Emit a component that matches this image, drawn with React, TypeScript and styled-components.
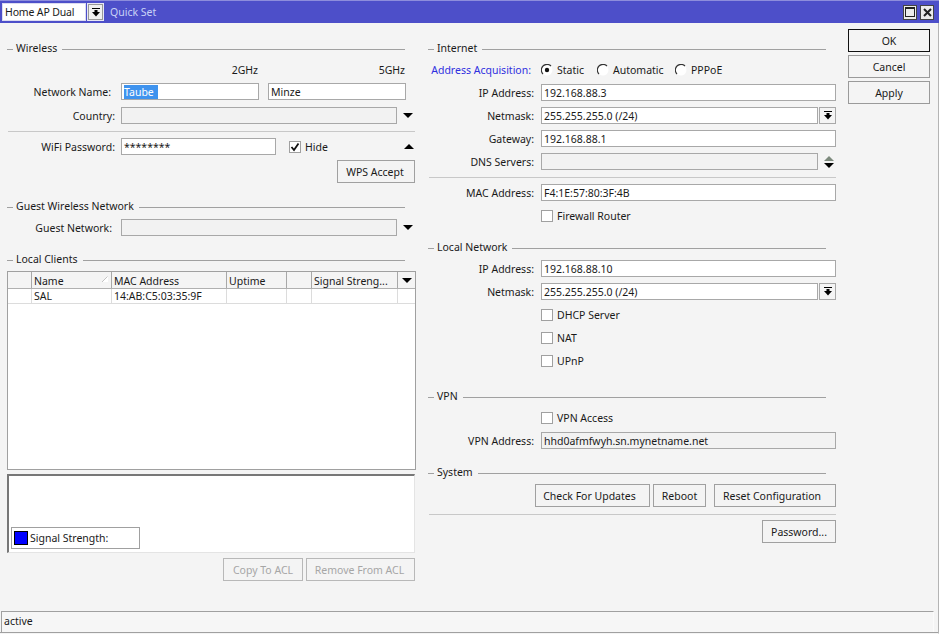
import React from 'react';
import styled, { createGlobalStyle } from 'styled-components';

const GlobalStyle = createGlobalStyle`
  html, body {
    margin: 0;
    padding: 0;
    background: #f4f4f4;
  }
  * {
    box-sizing: border-box;
  }
`;

const Window = styled.div`
  width: 939px;
  height: 634px;
  display: flex;
  flex-direction: column;
  overflow: hidden;
  background: #f4f4f4;
  color: #1a1a1a;
  font-family: 'Noto Sans', 'Liberation Sans', sans-serif;
  font-size: 10.5px;
`;

const TitleBar = styled.div`
  height: 23px;
  flex: none;
  display: flex;
  align-items: center;
  padding: 0 5px 0 2px;
  background: #4d4fc9;
  border-top: 1px solid #8d8ddc;
`;

const ModeSelect = styled.div`
  width: 84px;
  height: 18px;
  display: flex;
  align-items: center;
  padding-left: 2px;
  letter-spacing: -0.15px;
  background: #fff;
  border: 1px solid #dcdcf0;
`;

const TitleButton = styled.div`
  width: 17px;
  height: 18px;
  margin-left: 1px;
  display: flex;
  align-items: center;
  justify-content: center;
  background: #f0f0f0;
  border: 1px solid #e8e8f4;
  box-shadow: inset 0 0 0 1px #999;
`;

const TitleText = styled.div`
  margin-left: 6px;
  flex: 1;
  color: #c9d3f6;
`;

const WindowButton = styled.div`
  width: 14px;
  height: 15px;
  margin-left: 3px;
  display: flex;
  align-items: center;
  justify-content: center;
  background: #ececec;
  border: 1px solid #444;
`;

const Body = styled.div`
  flex: 1;
  display: flex;
  padding: 6px 0 0 7px;
  border-right: 1px solid #b4b4b4;
`;

const Column = styled.div<{ $left?: number; $label: number; $labelGap: number }>`
  --label: ${(p) => p.$label}px;
  --label-gap: ${(p) => p.$labelGap}px;
  width: 409px;
  margin-left: ${(p) => p.$left ?? 0}px;
  display: flex;
  flex-direction: column;
`;

const Actions = styled.div`
  width: 82px;
  margin-left: 11px;
  display: flex;
  flex-direction: column;
  gap: 3px;
`;

const ActionButton = styled.div<{ $primary?: boolean }>`
  height: 23px;
  display: flex;
  align-items: center;
  justify-content: center;
  border: 1px solid ${(p) => (p.$primary ? '#111' : '#9a9a9a')};
`;

const Heading = styled.div<{ $top: number }>`
  height: 14px;
  margin-top: ${(p) => p.$top}px;
  margin-right: 11px;
  display: flex;
  align-items: center;
  gap: 3px;
  white-space: nowrap;
  &::before {
    content: '';
    width: 6px;
    height: 1px;
    margin-top: 2px;
    background: #a0a0a0;
  }
  &::after {
    content: '';
    flex: 1;
    height: 1px;
    margin: 2px 0 0 2px;
    background: #a0a0a0;
  }
`;

const Row = styled.div<{ $top: number; $height?: number }>`
  height: ${(p) => p.$height ?? 17}px;
  margin-top: ${(p) => p.$top}px;
  display: flex;
  align-items: center;
`;

const Label = styled.div<{ $nudge?: number; $accent?: boolean }>`
  width: var(--label);
  flex: none;
  padding-right: calc(var(--label-gap) + ${(p) => p.$nudge ?? 0}px);
  text-align: right;
  white-space: nowrap;
  color: ${(p) => (p.$accent ? '#2f2fe0' : 'inherit')};
`;

const Field = styled.div<{ $width: number; $left?: number; $disabled?: boolean }>`
  width: ${(p) => p.$width}px;
  height: 17px;
  flex: none;
  margin-left: ${(p) => p.$left ?? 0}px;
  display: flex;
  align-items: center;
  padding-left: 2px;
  white-space: nowrap;
  overflow: hidden;
  background: ${(p) => (p.$disabled ? '#f2f2f2' : '#fff')};
  border: 1px solid #a8a8a8;
`;

const Selected = styled.span`
  padding-right: 4px;
  color: #fff;
  background: #3f93ee;
`;

const Caption = styled.div<{ $width: number }>`
  width: ${(p) => p.$width}px;
  text-align: right;
`;

const Separator = styled.div<{ $top: number }>`
  height: 1px;
  margin: ${(p) => p.$top}px 1px 0 1px;
  background: #c8c8c8;
`;

const ArrowSlot = styled.div<{ $left: number }>`
  margin-left: ${(p) => p.$left}px;
  display: flex;
  flex-direction: column;
  gap: 2px;
`;

const SmallButton = styled.div`
  width: 17px;
  height: 17px;
  margin-left: 1px;
  display: flex;
  align-items: center;
  justify-content: center;
  border: 1px solid #a8a8a8;
`;

const CheckBox = styled.div<{ $left?: number }>`
  width: 12px;
  height: 12px;
  flex: none;
  margin-left: ${(p) => p.$left ?? 0}px;
  margin-right: 4px;
  display: flex;
  align-items: center;
  justify-content: center;
  background: #fff;
  border: 1px solid #a0a0a0;
`;

const RadioItem = styled.div<{ $width: number }>`
  width: ${(p) => p.$width}px;
  display: flex;
  align-items: center;
  gap: 4px;
`;

const ButtonRow = styled.div<{ $top: number }>`
  height: 23px;
  margin-top: ${(p) => p.$top}px;
  margin-right: 1px;
  display: flex;
  justify-content: flex-end;
`;

const Button = styled.div<{ $width: number; $left?: number; $shift?: number; $disabled?: boolean }>`
  width: ${(p) => p.$width}px;
  margin-left: ${(p) => p.$left ?? 0}px;
  padding-right: ${(p) => p.$shift ?? 0}px;
  display: flex;
  align-items: center;
  justify-content: center;
  white-space: nowrap;
  color: ${(p) => (p.$disabled ? '#a6a6a6' : 'inherit')};
  border: 1px solid ${(p) => (p.$disabled ? '#b8b8b8' : '#a0a0a0')};
`;

const Table = styled.div`
  height: 199px;
  margin-top: 5px;
  background: #fff;
  border: 1px solid #a0a0a0;
`;

const TableRow = styled.div<{ $head?: boolean }>`
  height: ${(p) => (p.$head ? 17 : 15)}px;
  display: grid;
  grid-template-columns: 24px 80px 115px 60px 25px 86px 17px;
  background: ${(p) => (p.$head ? '#f4f4f4' : '#fff')};
  border-bottom: 1px solid ${(p) => (p.$head ? '#b0b0b0' : '#dcdcdc')};
`;

const Cell = styled.div<{ $head?: boolean }>`
  position: relative;
  display: flex;
  align-items: center;
  padding: ${(p) => (p.$head ? 1 : 0)}px 0 0 2px;
  white-space: nowrap;
  overflow: hidden;
  border-right: 1px solid ${(p) => (p.$head ? '#a8a8a8' : '#dcdcdc')};
  &:last-child {
    border-right: 0;
    justify-content: center;
    padding-left: 0;
  }
`;

const SortMark = styled.svg`
  position: absolute;
  right: 2px;
  top: 4px;
`;

const Graph = styled.div`
  height: 79px;
  margin-top: 4px;
  margin-right: 1px;
  display: flex;
  align-items: flex-end;
  padding: 0 0 3px 2px;
  background: #fff;
  border: 1px solid #e4e4e4;
  border-top: 2px solid #777;
  border-left: 2px solid #777;
`;

const Legend = styled.div`
  width: 129px;
  height: 22px;
  display: flex;
  align-items: center;
  gap: 2px;
  padding-left: 2px;
  border: 1px solid #a0a0a0;
`;

const Swatch = styled.div`
  width: 14px;
  height: 14px;
  background: #0000ff;
  border: 1px solid #000;
`;

const Footer = styled.div`
  height: 23px;
  flex: none;
  display: flex;
  padding: 0 4px 1px 1px;
  border-right: 1px solid #b4b4b4;
  border-bottom: 1px solid #f4f4f4;
  box-shadow: inset 0 -1px 0 #a0a0a0;
`;

const StatusBar = styled.div`
  flex: 1;
  display: flex;
  align-items: center;
  padding: 0 0 2px 2px;
  background: #f6f6f6;
  border-top: 1px solid #a0a0a0;
  border-left: 1px solid #a0a0a0;
  border-right: 1px solid #fbfbfb;
`;

const Drop = ({ up, color = '#000' }: { up?: boolean; color?: string }) => (
  <svg width="10" height="5" viewBox="0 0 10 5">
    <path d={up ? 'M5 0 L10 5 L0 5 Z' : 'M0 0 L10 0 L5 5 Z'} fill={color} />
  </svg>
);

const DropBar = () => (
  <svg width="8" height="9" viewBox="0 0 8 9">
    <rect x="0" y="0" width="8" height="1" fill="#000" />
    <rect x="2.5" y="2" width="3" height="2" fill="#000" />
    <path d="M0 4 L8 4 L4 8.5 Z" fill="#000" />
  </svg>
);

const Radio = ({ on }: { on?: boolean }) => (
  <svg width="12" height="12" viewBox="0 0 12 12">
    <circle cx="6" cy="6" r="5.5" fill="#fff" />
    <path d="M10 2 A5.5 5.5 0 0 0 2 10" fill="none" stroke="#333" strokeWidth="1.1" />
    {on && <circle cx="6" cy="6" r="2.2" fill="#111" />}
  </svg>
);

const Check = () => (
  <svg width="10" height="10" viewBox="0 0 10 10">
    <path d="M1.5 5 L4 8 L8.5 1.5" fill="none" stroke="#111" strokeWidth="1.8" />
  </svg>
);

const App = () => (
  <Window>
    <GlobalStyle />
    <TitleBar>
      <ModeSelect>Home AP Dual</ModeSelect>
      <TitleButton>
        <DropBar />
      </TitleButton>
      <TitleText>Quick Set</TitleText>
      <WindowButton>
        <svg width="10" height="10" viewBox="0 0 10 10">
          <rect x="0.5" y="0.5" width="9" height="9" fill="none" stroke="#222" />
          <rect x="0" y="0" width="10" height="2" fill="#222" />
        </svg>
      </WindowButton>
      <WindowButton>
        <svg width="9" height="9" viewBox="0 0 9 9">
          <path d="M1 1 L8 8 M8 1 L1 8" stroke="#222" strokeWidth="2" />
        </svg>
      </WindowButton>
    </TitleBar>
    <Body>
      <Column $label={114} $labelGap={6}>
        <Heading $top={12}>Wireless</Heading>
        <Row $top={8} $height={14}>
          <Caption $width={251}>2GHz</Caption>
          <Caption $width={147}>5GHz</Caption>
        </Row>
        <Row $top={6}>
          <Label $nudge={4}>Network Name:</Label>
          <Field $width={138}>
            <Selected>Taube</Selected>
          </Field>
          <Field $width={138} $left={9}>
            Minze
          </Field>
        </Row>
        <Row $top={7}>
          <Label>Country:</Label>
          <Field $width={276} $disabled />
          <ArrowSlot $left={6}>
            <Drop />
          </ArrowSlot>
        </Row>
        <Separator $top={7} />
        <Row $top={6}>
          <Label>WiFi Password:</Label>
          <Field $width={155}>********</Field>
          <CheckBox $left={13}>
            <Check />
          </CheckBox>
          Hide
          <ArrowSlot $left={76}>
            <Drop up />
          </ArrowSlot>
        </Row>
        <ButtonRow $top={5}>
          <Button $width={78} $shift={2}>
            WPS Accept
          </Button>
        </ButtonRow>
        <Heading $top={16}>Guest Wireless Network</Heading>
        <Row $top={6}>
          <Label $nudge={3}>Guest Network:</Label>
          <Field $width={276} $disabled />
          <ArrowSlot $left={6}>
            <Drop />
          </ArrowSlot>
        </Row>
        <Heading $top={16}>Local Clients</Heading>
        <Table>
          <TableRow $head>
            <Cell $head />
            <Cell $head>
              Name
              <SortMark width="8" height="7" viewBox="0 0 8 7">
                <path d="M7 0 L7 6 L1 6 Z" fill="#fff" />
                <path d="M6.5 0.5 L1 6" stroke="#b4b4b4" strokeWidth="0.8" fill="none" />
              </SortMark>
            </Cell>
            <Cell $head>MAC Address</Cell>
            <Cell $head>Uptime</Cell>
            <Cell $head />
            <Cell $head>Signal Streng...</Cell>
            <Cell $head>
              <Drop />
            </Cell>
          </TableRow>
          <TableRow>
            <Cell />
            <Cell>SAL</Cell>
            <Cell>14:AB:C5:03:35:9F</Cell>
            <Cell />
            <Cell />
            <Cell />
            <Cell />
          </TableRow>
        </Table>
        <Graph>
          <Legend>
            <Swatch />
            Signal Strength:
          </Legend>
        </Graph>
        <ButtonRow $top={5}>
          <Button $width={80} $disabled>
            Copy To ACL
          </Button>
          <Button $width={109} $left={3} $shift={2} $disabled>
            Remove From ACL
          </Button>
        </ButtonRow>
      </Column>
      <Column $left={12} $label={113} $labelGap={7}>
        <Heading $top={12}>Internet</Heading>
        <Row $top={8} $height={14}>
          <Label $nudge={3} $accent>
            Address Acquisition:
          </Label>
          <RadioItem $width={56}>
            <Radio on />
            Static
          </RadioItem>
          <RadioItem $width={78}>
            <Radio />
            Automatic
          </RadioItem>
          <RadioItem $width={60}>
            <Radio />
            PPPoE
          </RadioItem>
        </Row>
        <Row $top={7}>
          <Label>IP Address:</Label>
          <Field $width={295}>192.168.88.3</Field>
        </Row>
        <Row $top={6}>
          <Label>Netmask:</Label>
          <Field $width={277}>255.255.255.0 (/24)</Field>
          <SmallButton>
            <DropBar />
          </SmallButton>
        </Row>
        <Row $top={6}>
          <Label>Gateway:</Label>
          <Field $width={295}>192.168.88.1</Field>
        </Row>
        <Row $top={6}>
          <Label>DNS Servers:</Label>
          <Field $width={277} $disabled />
          <ArrowSlot $left={6}>
            <Drop up color="#7d8a7d" />
            <Drop />
          </ArrowSlot>
        </Row>
        <Separator $top={7} />
        <Row $top={6}>
          <Label>MAC Address:</Label>
          <Field $width={295}>F4:1E:57:80:3F:4B</Field>
        </Row>
        <Row $top={6}>
          <Label />
          <CheckBox />
          Firewall Router
        </Row>
        <Heading $top={16}>Local Network</Heading>
        <Row $top={6}>
          <Label>IP Address:</Label>
          <Field $width={295}>192.168.88.10</Field>
        </Row>
        <Row $top={6}>
          <Label>Netmask:</Label>
          <Field $width={277}>255.255.255.0 (/24)</Field>
          <SmallButton>
            <DropBar />
          </SmallButton>
        </Row>
        <Row $top={6}>
          <Label />
          <CheckBox />
          DHCP Server
        </Row>
        <Row $top={6}>
          <Label />
          <CheckBox />
          NAT
        </Row>
        <Row $top={6}>
          <Label />
          <CheckBox />
          UPnP
        </Row>
        <Heading $top={20}>VPN</Heading>
        <Row $top={6}>
          <Label />
          <CheckBox />
          VPN Access
        </Row>
        <Row $top={6}>
          <Label>VPN Address:</Label>
          <Field $width={295} $disabled>
            hhd0afmfwyh.sn.mynetname.net
          </Field>
        </Row>
        <Heading $top={16}>System</Heading>
        <ButtonRow $top={5}>
          <Button $width={115} $shift={6}>
            Check For Updates
          </Button>
          <Button $width={53} $left={3}>
            Reboot
          </Button>
          <Button $width={122} $left={8} $shift={6}>
            Reset Configuration
          </Button>
        </ButtonRow>
        <Separator $top={7} />
        <ButtonRow $top={5}>
          <Button $width={74}>Password...</Button>
        </ButtonRow>
      </Column>
      <Actions>
        <ActionButton $primary>OK</ActionButton>
        <ActionButton>Cancel</ActionButton>
        <ActionButton>Apply</ActionButton>
      </Actions>
    </Body>
    <Footer>
      <StatusBar>active</StatusBar>
    </Footer>
  </Window>
);

export default App;
